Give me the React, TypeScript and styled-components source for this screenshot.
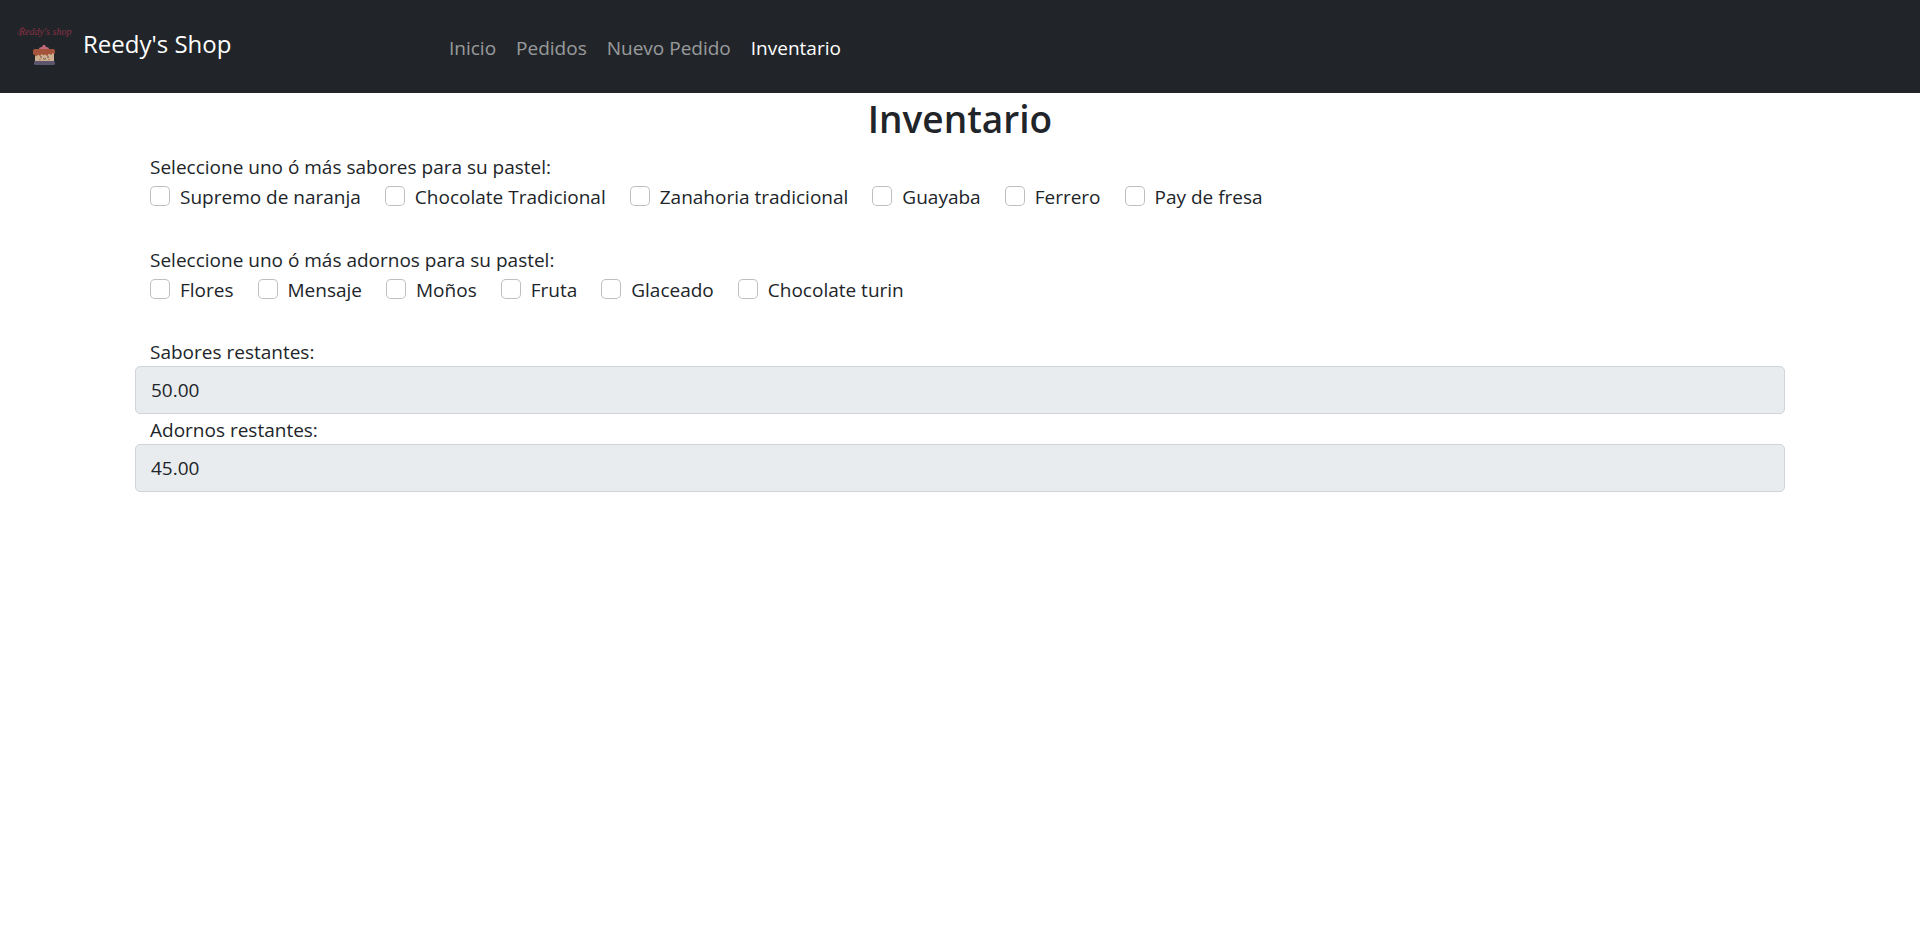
import React from 'react';
import styled, { createGlobalStyle } from 'styled-components';

const GlobalStyle = createGlobalStyle`
  *, *::before, *::after { box-sizing: border-box; }
  body {
    margin: 0;
    background: #fff;
    color: #212529;
    font-family: "Segoe UI", "Open Sans", "Noto Sans", sans-serif;
    font-size: 19px;
    line-height: 30px;
  }
`;

const Navbar = styled.nav`
  display: flex;
  align-items: center;
  min-height: 93px;
  padding: 10px 15px;
  background: #212529;
`;

const Brand = styled.a`
  display: flex;
  align-items: center;
  gap: 8px;
  width: 424px;
  padding-bottom: 6px;
  color: #fff;
  font-size: 24px;
  text-decoration: none;
`;

const Logo = styled.svg`
  flex: none;
  width: 60px;
  height: 50px;
`;

const NavList = styled.ul`
  display: flex;
  margin: 0;
  padding: 2px 0 0;
  list-style: none;
`;

const NavLink = styled.a<{ $active?: boolean }>`
  display: block;
  padding: 10px;
  color: ${({ $active }) => ($active ? '#fff' : 'rgba(255, 255, 255, 0.55)')};
  text-decoration: none;
`;

const Content = styled.main`
  margin: 0 135px;
`;

const Title = styled.h2`
  margin: 0;
  padding: 2px 0 9px;
  font-size: 37px;
  font-weight: 600;
  line-height: 48px;
  text-align: center;
`;

const Group = styled.fieldset`
  min-width: 0;
  margin: 0 0 33px;
  padding: 0 15px;
  border: 0;
`;

const Legend = styled.legend`
  padding: 0;
`;

const Options = styled.div`
  display: flex;
  flex-wrap: wrap;
  column-gap: 24px;
`;

const Option = styled.label`
  display: flex;
  align-items: center;
  gap: 10px;
`;

const Checkbox = styled.input`
  appearance: none;
  width: 20px;
  height: 20px;
  margin: 0 0 2px;
  border: 1px solid rgba(0, 0, 0, 0.25);
  border-radius: 5px;
  background: #fff;

  &:checked {
    border-color: #0d6efd;
    background: #0d6efd;
  }
`;

const FieldLabel = styled.label`
  display: block;
  padding: 0 15px;
  line-height: 28px;
`;

const Field = styled.input`
  display: block;
  width: 100%;
  height: 48px;
  margin: 0 0 2px;
  padding: 8px 15px;
  border: 1px solid #ced4da;
  border-radius: 5px;
  background: #e9ecef;
  color: #212529;
  font: inherit;
`;

const links = ['Inicio', 'Pedidos', 'Nuevo Pedido', 'Inventario'];

const groups = [
  {
    legend: 'Seleccione uno ó más sabores para su pastel:',
    options: ['Supremo de naranja', 'Chocolate Tradicional', 'Zanahoria tradicional', 'Guayaba', 'Ferrero', 'Pay de fresa'],
  },
  {
    legend: 'Seleccione uno ó más adornos para su pastel:',
    options: ['Flores', 'Mensaje', 'Moños', 'Fruta', 'Glaceado', 'Chocolate turin'],
  },
];

const fields = [
  { id: 'sabores', label: 'Sabores restantes:', value: '50.00' },
  { id: 'adornos', label: 'Adornos restantes:', value: '45.00' },
];

function CakeLogo() {
  return (
    <Logo viewBox="0 0 60 50" aria-hidden="true">
      <text x="4" y="16" fill="#8a3044" fontFamily="'Liberation Serif', serif" fontStyle="italic" fontSize="10">
        Reddy's shop
      </text>
      <path d="M7 16C1 17 2 11 9 8" fill="none" stroke="#6b2a3a" strokeWidth=".8" />
      <rect x="20" y="31" width="19" height="13" fill="#cdb08f" />
      <path
        d="M18 32q0-2 2-2h18q2 0 2 2v2q-1 2-2 0-1 0-1 1-1 2-2 0-1-1-2 1-1 2-2 0-1-1-2 0-1 1-2-1-1 0-1 1-1 2-2 0-1-1-2 1-1 1-2-1-1 0-2-1z"
        fill="#a5543c"
      />
      <path d="M24 30q0-2 3-2l1-2h2l1 2q3 0 3 2z" fill="#c06b7b" />
      <circle cx="26" cy="38" r=".8" fill="#56423d" />
      <circle cx="33" cy="38" r=".8" fill="#56423d" />
      <path d="M28 39.500q1.500 1.500 3 0" fill="none" stroke="#56423d" strokeWidth=".8" />
      <path d="M24 40.500h2M33 40.500h2" stroke="#c97f78" strokeWidth="1.500" />
      <rect x="19" y="42" width="21" height="4" rx="1.500" fill="#5b566e" />
    </Logo>
  );
}

export default function App() {
  return (
    <>
      <GlobalStyle />
      <Navbar>
        <Brand href="#">
          <CakeLogo />
          Reedy's Shop
        </Brand>
        <NavList>
          {links.map((link) => (
            <li key={link}>
              <NavLink href="#" $active={link === 'Inventario'}>{link}</NavLink>
            </li>
          ))}
        </NavList>
      </Navbar>
      <Content>
        <Title>Inventario</Title>
        {groups.map((group) => (
          <Group key={group.legend}>
            <Legend>{group.legend}</Legend>
            <Options>
              {group.options.map((option) => (
                <Option key={option}>
                  <Checkbox type="checkbox" />
                  {option}
                </Option>
              ))}
            </Options>
          </Group>
        ))}
        {fields.map((field) => (
          <React.Fragment key={field.id}>
            <FieldLabel htmlFor={field.id}>{field.label}</FieldLabel>
            <Field id={field.id} type="text" value={field.value} readOnly />
          </React.Fragment>
        ))}
      </Content>
    </>
  );
}
